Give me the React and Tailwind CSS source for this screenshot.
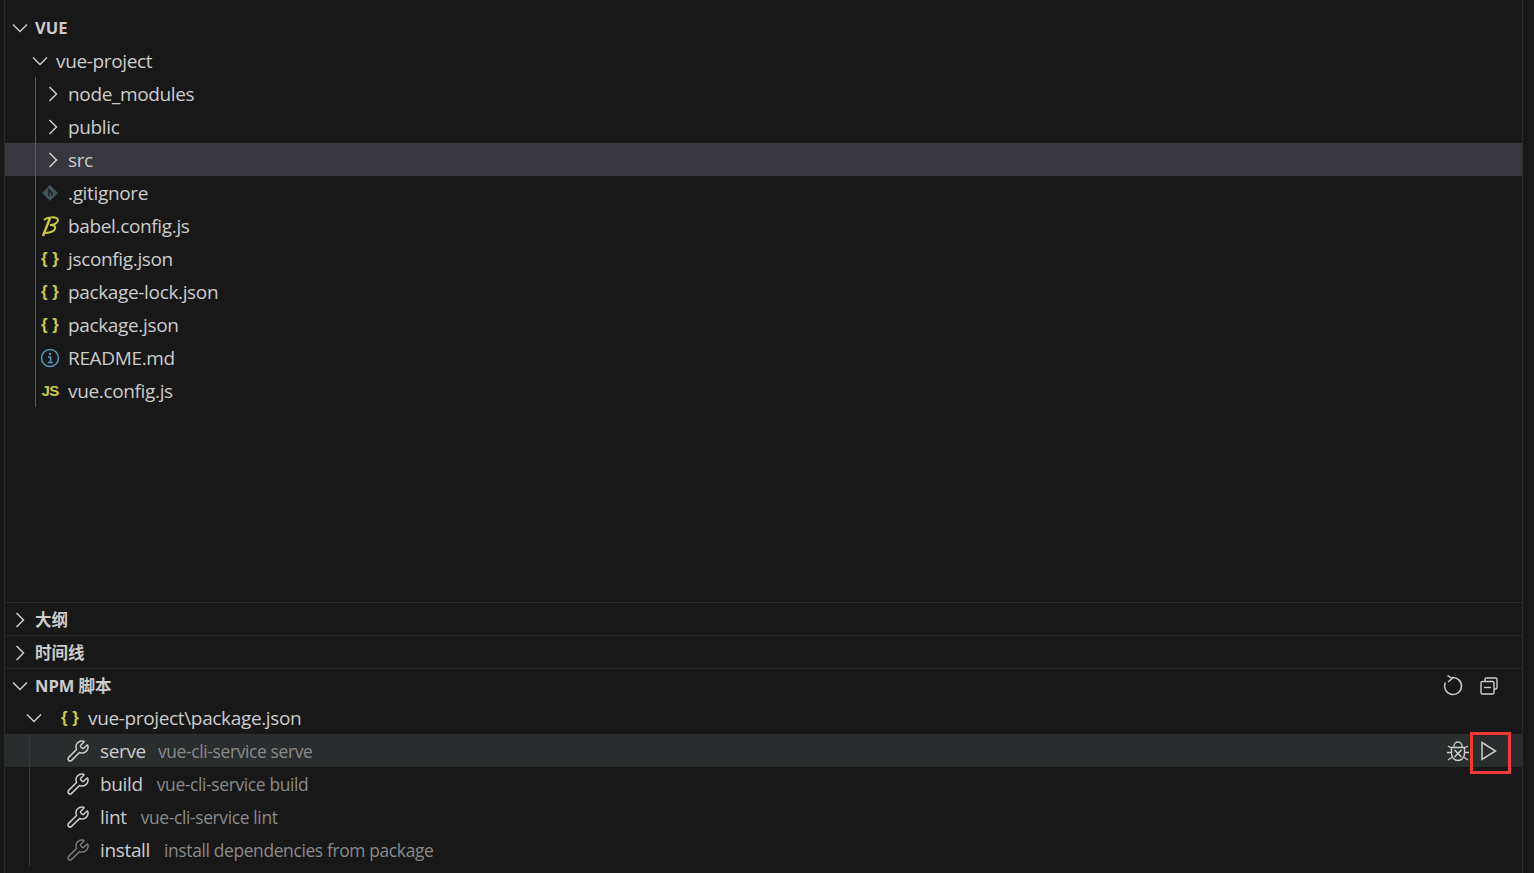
// VS Code explorer sidebar with the NPM scripts panel
import React from 'react';
import { Wrench } from 'lucide-react';

const FONT = '"Open Sans", "Noto Sans CJK SC", sans-serif';

const Chevron = ({ open }) => (
  <svg width="24" height="24" viewBox="0 0 24 24" fill="none" stroke="#cccccc" strokeWidth="1.5" className="shrink-0">
    {open ? <path d="M5 8.500l7 7 7-7" /> : <path d="M8.500 5l7 7-7 7" />}
  </svg>
);

const Braces = () => (
  <span className="w-[20px] text-center text-[#cbcb41] text-[17px] font-bold leading-none tracking-normal whitespace-pre font-['Liberation_Sans']">{'{ }'}</span>
);

const GitIcon = () => (
  <svg width="18" height="18" viewBox="0 0 18 18">
    <path d="M9 1l8 8-8 8-8-8z" fill="#41535b" />
    <path d="M7 5l4 4v3M8 7v5" stroke="#181818" strokeWidth="1.2" fill="none" />
  </svg>
);

const BabelIcon = () => (
  <svg width="20" height="22" viewBox="0 0 20 22" fill="none" stroke="#cbcb41" strokeWidth="2">
    <path d="M4 5c3-3 14-4 14 0 0 3-4 5-8 5 4 0 6 1 5 4-1 3-8 4-12 4" />
    <path d="M10 3L3 21" strokeWidth="2.400" />
  </svg>
);

const InfoIcon = () => (
  <svg width="20" height="20" viewBox="0 0 20 20" fill="none">
    <circle cx="10" cy="10" r="8.500" stroke="#519aba" strokeWidth="1.500" />
    <path d="M8 9h2.600v5.200M7.800 14.400h5" stroke="#519aba" strokeWidth="1.500" />
    <circle cx="10" cy="6" r="1.200" fill="#519aba" />
  </svg>
);

const JsIcon = () => (
  <span className="w-[20px] text-center text-[#cbcb41] text-[15px] font-bold leading-none tracking-[-0.6px] font-['Liberation_Sans']">JS</span>
);

const RefreshIcon = () => (
  <svg width="22" height="22" viewBox="0 0 22 22" fill="none" stroke="#cccccc" strokeWidth="1.500">
    <path d="M5.500 0.500l4.500 3-4 3.500" />
    <path d="M10 2.600A8.500 8.500 0 1 1 3.300 7.500" />
  </svg>
);

const DebugIcon = () => (
  <svg width="24" height="24" viewBox="0 0 24 24" fill="none" stroke="#cccccc" strokeWidth="1.400">
    <path d="M8 8.500V7a4 4 0 0 1 8 0v1.500" />
    <path d="M5.500 8.500h13v6c0 4-3 7-6.500 7s-6.500-3-6.500-7z" />
    <path d="M1 13.500h4.500M18.500 13.500H23M2 7l3.500 2M22 7l-3.500 2M2 21l4.500-3M22 21l-4.500-3" />
    <path d="M8.500 11l7 7M15.500 11l-7 7" strokeWidth="1.700" />
  </svg>
);

const CollapseIcon = () => (
  <svg width="20" height="20" viewBox="0 0 20 20" fill="none" stroke="#cccccc" strokeWidth="1.400">
    <path d="M6 5V3.500A1.500 1.500 0 0 1 7.500 2h9A1.500 1.500 0 0 1 18 3.500v8a1.500 1.500 0 0 1-1.500 1.500H15" />
    <rect x="2" y="5.500" width="13" height="12.500" rx="1.500" />
    <path d="M5 11.500h7" />
  </svg>
);

const PlayIcon = () => (
  <svg width="20" height="20" viewBox="0 0 20 20" fill="none" stroke="#cccccc" strokeWidth="1.500">
    <path d="M3 1.500L16.500 10 3 18.500z" />
  </svg>
);

const Row = ({ className = '', children }) => (
  <div className={`h-[33px] flex items-center ${className}`}>{children}</div>
);

const FolderRow = ({ name, selected }) => (
  <Row className={`pl-[36px] ${selected ? 'bg-[#37373d]' : ''}`}>
    <Chevron />
    <span className="ml-[3px] mt-[2px]">{name}</span>
  </Row>
);

const FileRow = ({ icon, name }) => (
  <Row className="pl-[35px]">
    <span className="w-[20px] flex justify-center">{icon}</span>
    <span className="ml-[8px] mt-[2px]">{name}</span>
  </Row>
);

const SectionHeader = ({ title, open, actions }) => (
  <Row className="pl-[3px] pt-[2px] border-t border-[#2b2b2b]">
    <Chevron open={open} />
    <span className="ml-[3px] text-[16.500px] font-bold tracking-normal">{title}</span>
    {actions}
  </Row>
);

const ScriptRow = ({ name, desc, dim, active }) => (
  <Row className={`pl-[61px] ${active ? 'bg-[#2a2d2e]' : ''}`}>
    <Wrench size={24} strokeWidth={1.500} className={`shrink-0 ${dim ? 'text-[#777777]' : 'text-[#cccccc]'}`} />
    <span className="ml-[10px] mt-[2px]">{name}</span>
    <span className={`mt-[2px] text-[#8a8a8a] text-[17.400px] ${active ? 'ml-[12px]' : 'ml-[14px]'}`}>{desc}</span>
    {active && (
      <div className="ml-auto flex items-center">
        <DebugIcon />
        <div className="relative ml-[9px] mr-[23px] w-[20px] h-[20px] flex items-center justify-center">
          <PlayIcon />
          <div className="absolute -left-[9px] -top-[9px] w-[41px] h-[42px] border-[3px] border-[#f03a3a]" />
        </div>
      </div>
    )}
  </Row>
);

export default function App() {
  return (
    <div
      className="h-[873px] w-[1534px] bg-[#181818] text-[#cccccc] text-[19px] tracking-[-0.35px] overflow-hidden"
      style={{ fontFamily: FONT }}
    >
      <div className="h-full w-[1519px] ml-[4px] border-x border-[#2b2b2b] flex flex-col">
        {/* Explorer */}
        <div className="flex-1 pt-[11px]">
          <Row className="pl-[3px] pt-[1px]">
            <Chevron open />
            <span className="ml-[3px] text-[16.500px] font-bold tracking-normal">VUE</span>
          </Row>
          <Row className="pl-[23px]">
            <Chevron open />
            <span className="ml-[4px] mt-[2px]">vue-project</span>
          </Row>
          <div className="relative">
            <div className="absolute left-[30px] top-0 bottom-0 w-px bg-[#585858]" />
            <FolderRow name="node_modules" />
            <FolderRow name="public" />
            <FolderRow name="src" selected />
            <FileRow icon={<GitIcon />} name=".gitignore" />
            <FileRow icon={<BabelIcon />} name="babel.config.js" />
            <FileRow icon={<Braces />} name="jsconfig.json" />
            <FileRow icon={<Braces />} name="package-lock.json" />
            <FileRow icon={<Braces />} name="package.json" />
            <FileRow icon={<InfoIcon />} name="README.md" />
            <FileRow icon={<JsIcon />} name="vue.config.js" />
          </div>
        </div>

        {/* Collapsed sections */}
        <SectionHeader title="大纲" />
        <SectionHeader title="时间线" />
        <SectionHeader
          title="NPM 脚本"
          open
          actions={
            <div className="ml-auto mr-[23px] flex items-center gap-[15px]">
              <RefreshIcon />
              <CollapseIcon />
            </div>
          }
        />
        <Row className="pl-[17px]">
          <Chevron open />
          <span className="ml-[14px] flex"><Braces /></span>
          <span className="ml-[8px] mt-[2px]">vue-project\package.json</span>
        </Row>
        <div className="relative mb-[7px]">
          <ScriptRow name="serve" desc="vue-cli-service serve" active />
          <ScriptRow name="build" desc="vue-cli-service build" />
          <ScriptRow name="lint" desc="vue-cli-service lint" />
          <ScriptRow name="install" desc="install dependencies from package" dim />
          <div className="absolute left-[24px] top-0 bottom-0 w-px bg-[#3a3a3a]" />
        </div>
      </div>
    </div>
  );
}
